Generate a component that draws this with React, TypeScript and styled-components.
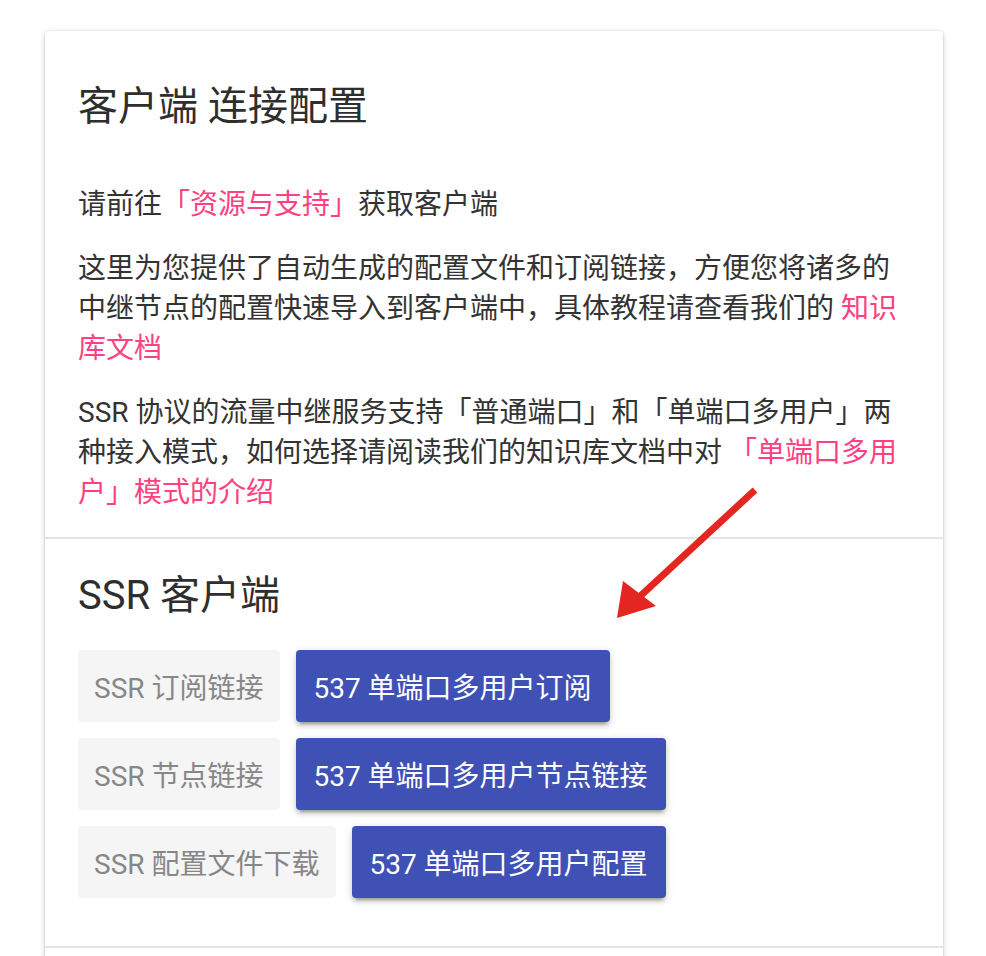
import React from "react";
import styled, { createGlobalStyle } from "styled-components";

const GlobalStyle = createGlobalStyle`
  html, body {
    margin: 0;
    padding: 0;
    background: #ffffff;
  }
  body {
    font-family: "Roboto", "Noto Sans CJK SC", sans-serif;
    -webkit-font-smoothing: antialiased;
  }
`;

const Page = styled.div`
  position: relative;
  padding: 31px 43px 0 45px;
  height: 956px;
  box-sizing: border-box;
  overflow: hidden;
`;

const Card = styled.div`
  background: #fff;
  border-radius: 4px;
  box-shadow: 0 2px 6px 0 rgba(0, 0, 0, 0.18), 0 1px 2px 0 rgba(0, 0, 0, 0.1),
    0 0 0 1px rgba(0, 0, 0, 0.03);
`;

const Section = styled.div<{ $top: number; $bottom: number }>`
  padding: ${(p) => p.$top}px 33px ${(p) => p.$bottom}px;
  border-bottom: 2px solid #e4e4e4;
`;

const Title = styled.h2`
  margin: 0;
  font-size: 40px;
  line-height: 48px;
  font-weight: 400;
  color: #2e2e2e;
`;

const Para = styled.p<{ $first?: boolean }>`
  margin: ${(p) => (p.$first ? 54 : 24)}px 0 0;
  font-size: 28px;
  line-height: 40px;
  color: #333;
`;

const Link = styled.a`
  color: #ff4081;
  text-decoration: none;
`;

const ButtonList = styled.div`
  margin-top: 30px;
  display: flex;
  flex-direction: column;
  gap: 16px;
`;

const Row = styled.div`
  display: flex;
  gap: 16px;
`;

const Label = styled.span`
  display: inline-flex;
  align-items: center;
  height: 72px;
  padding: 0 17px 0 16px;
  background: #f5f5f5;
  color: #878787;
  font-size: 28px;
  border-radius: 4px;
  white-space: nowrap;
`;

const Button = styled.button`
  display: inline-flex;
  align-items: center;
  height: 72px;
  padding: 0 18px 0 17px;
  border: none;
  border-radius: 4px;
  background: #3f51b5;
  color: #fff;
  font-family: "Roboto", "Noto Sans CJK SC", sans-serif;
  font-size: 28px;
  white-space: nowrap;
  box-shadow: 0 4px 4px 0 rgba(0, 0, 0, 0.14), 0 6px 2px -4px rgba(0, 0, 0, 0.2),
    0 2px 10px 0 rgba(0, 0, 0, 0.12);
  cursor: pointer;
`;

const Arrow = styled.svg`
  position: absolute;
  left: 0;
  top: 0;
  pointer-events: none;
`;

const rows = [
  { label: "SSR 订阅链接", action: "537 单端口多用户订阅" },
  { label: "SSR 节点链接", action: "537 单端口多用户节点链接" },
  { label: "SSR 配置文件下载", action: "537 单端口多用户配置" },
];

export default function App() {
  return (
    <>
      <GlobalStyle />
      <Page>
        <Card>
          <Section $top={52} $bottom={24}>
            <Title>客户端 连接配置</Title>
            <Para $first>
              请前往<Link href="#">「资源与支持」</Link>获取客户端
            </Para>
            <Para>
              这里为您提供了自动生成的配置文件和订阅链接，方便您将诸多的中继节点的配置快速导入到客户端中，具体教程请查看我们的{" "}
              <Link href="#">知识库文档</Link>
            </Para>
            <Para>
              SSR 协议的流量中继服务支持「普通端口」和「单端口多用户」两种接入模式，如何选择请阅读我们的知识库文档中对{" "}
              <Link href="#">「单端口多用户」模式的介绍</Link>
            </Para>
          </Section>
          <Section $top={33} $bottom={48}>
            <Title>SSR 客户端</Title>
            <ButtonList>
              {rows.map((r) => (
                <Row key={r.label}>
                  <Label>{r.label}</Label>
                  <Button>{r.action}</Button>
                </Row>
              ))}
            </ButtonList>
          </Section>
          <Section $top={60} $bottom={60} />
        </Card>
        <Arrow width="986" height="956" viewBox="0 0 986 956">
          <line x1="755" y1="490" x2="636" y2="600" stroke="#e3261f" strokeWidth="7" />
          <polygon points="617,618 623,581 656,606" fill="#e3261f" />
        </Arrow>
      </Page>
    </>
  );
}
